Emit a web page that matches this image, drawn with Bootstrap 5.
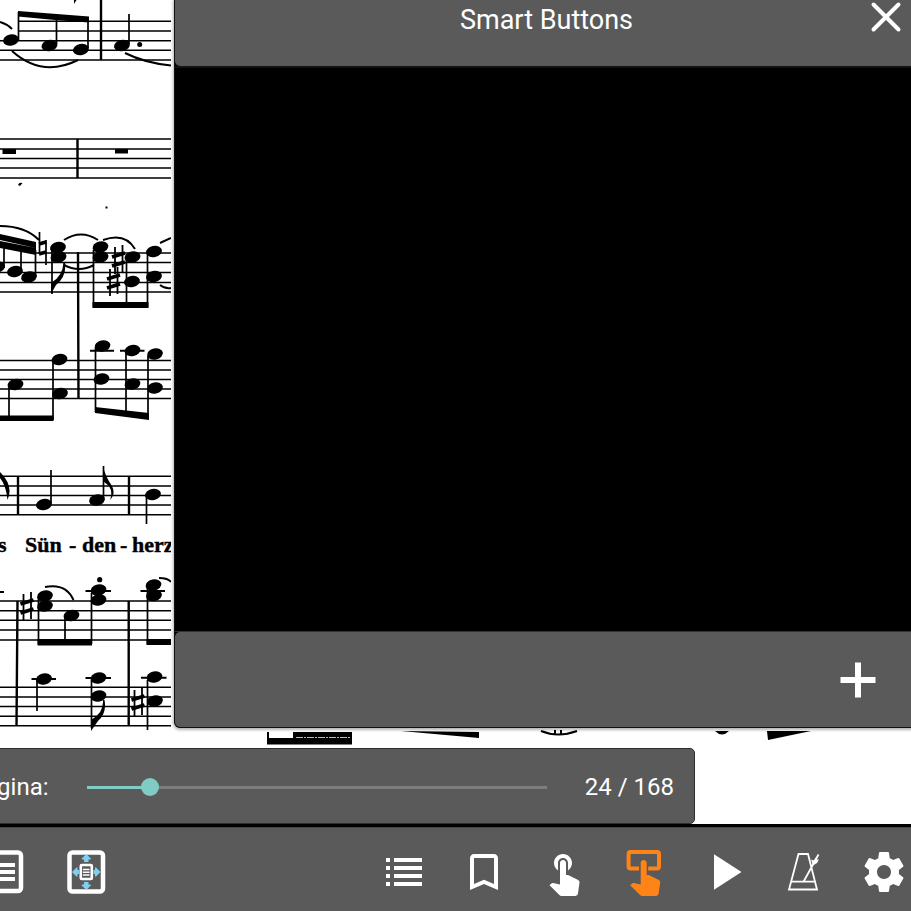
<!DOCTYPE html>
<html lang="es">
<head>
<meta charset="utf-8">
<meta name="viewport" content="width=device-width, initial-scale=1">
<title>Smart Buttons</title>
<link href="https://cdn.jsdelivr.net/npm/bootstrap@5.3.0/dist/css/bootstrap.min.css" rel="stylesheet">
<style>
  :root { --chrome: #5a5a5a; --chrome-edge: #2e2e2e; --accent: #80cbc4; --active: #ff8418; }
  body { font-family: Roboto, "Noto Sans", sans-serif; background: #fff; }
  .score { z-index: 0; }
  .lyrics { font: bold 22px "Liberation Serif", serif; stroke: #000; stroke-width: .4px; }
  .smart-panel { z-index: 1; margin: 0 -8px 20px 174px; background: #000; border: 1px solid #111; border-top: 0; border-radius: 0 0 6px 6px; box-shadow: 0 1px 3px 1px rgba(0,0,0,.3); }
  .panel-head, .panel-foot { background: var(--chrome); border-radius: 5px; }
  .panel-head { min-height: 66px; border-radius: 0 0 5px 5px; }
  .panel-body { border-top: 2px solid #111; border-bottom: 1px solid #333; }
  .panel-foot { min-height: 95px; padding-right: 36px; }
  .panel-title { font-size: 27px; line-height: 40px; font-weight: 400; }
  .head-side { width: 64px; height: 34px; }
  .tool { background: none; border: 0; padding: 0; color: #fff; display: flex; align-items: center; justify-content: center; }
  .pager { z-index: 1; height: 76px; margin: 0 216px 0 -34px; padding: 2px 20px 0 2px; gap: 29px; font-size: 24px; background: var(--chrome); border: 1px solid var(--chrome-edge); border-radius: 5px; }
  .page-slider { --at: 0; appearance: none; -webkit-appearance: none; height: 20px; margin: 0; min-width: 0;
    background:
      linear-gradient(var(--accent), var(--accent)) 9px 50% / calc((100% - 18px) * var(--at)) 3px no-repeat,
      linear-gradient(#7d7d7d, #7d7d7d) 50% 50% / calc(100% - 18px) 3px no-repeat; }
  .page-slider::-webkit-slider-thumb { -webkit-appearance: none; width: 18px; height: 18px; border-radius: 50%; background: var(--accent); }
  .page-slider::-moz-range-thumb { width: 18px; height: 18px; border: 0; border-radius: 50%; background: var(--accent); }
  .toolbar { z-index: 2; height: 87px; margin: 0 -13px 0 -37px; padding-top: 5px; background: var(--chrome); border-top: 3px solid #000; box-shadow: inset 0 1px 0 #444; }
  .toolbar .tool { width: 80px; height: 80px; }
  .toolbar .view-tool { width: 82px; }
  .toolbar .is-active { color: var(--active); }
</style>
</head>
<body class="vh-100 overflow-hidden">
<div class="d-flex flex-column vh-100 overflow-hidden">
  <main class="flex-grow-1 position-relative d-flex flex-column">

    <svg class="score position-absolute top-0 start-0 w-100 h-100" viewBox="0 0 911 824" preserveAspectRatio="xMinYMin slice" role="img" aria-label="Partitura">
      <defs>
        <clipPath id="leaf"><rect width="171" height="740"/></clipPath>
        <ellipse id="n" rx="8" ry="5.6" transform="rotate(-12)"/>
        <g id="sharp" fill="none" stroke="#000"><path stroke-width="1.8" d="M-3.5-13V14M4-15V12"/><path stroke-width="3.800" d="M-6.500-3L6.500-7M-6.500 6L6.500 2"/></g>
      </defs>
      <g clip-path="url(#leaf)">
        <g fill="none" stroke="#000" stroke-width="1.600">
          <path d="M18 21.300H171M18 31H171M0 40.700H171M0 50.300H171M0 60H171"/>
          <path d="M0 139H171M0 149H171M0 158.500H171M0 168H171M0 178H171"/>
          <path d="M36 253H171M0 262.500H171M0 272.500H171M0 282.500H171M0 292H171"/>
          <path d="M0 360.500H171M0 370H171M0 379.500H171M0 389H171M0 398.500H171"/>
          <path d="M0 476.300H171M0 486H171M0 495.500H171M0 505H171M0 514.700H171"/>
          <path d="M0 601H171M0 610.700H171M0 620.300H171M0 630H171M0 640H171"/>
          <path d="M0 687.300H171M0 697H171M0 706.500H171M0 716.300H171M0 725.700H171"/>
        </g>
        <g fill="none" stroke="#000" stroke-width="2.4">
          <path d="M101 0V60M77.500 139V178M78 252L78.500 398M18 476V515M129 476V515M17.500 601L16.500 726M128.700 601V726"/>
        </g>
        <g fill="none" stroke="#000" stroke-width="1.700">
          <path d="M18.500 12V40M56.500 18V44M88 20V48M129 14V44"/>
          <path d="M4 244V268M21 248V272M35.500 250V277M52 250V294M93.500 250V307M126.500 260V305M147.500 250V307"/>
          <path d="M9 385V417M53 360V420M95.500 348V412M126 353V413M148 356V419"/>
          <path d="M51 470V503M103.500 466V500M146.500 494V524"/>
          <path d="M38.500 597V644M65 617V643M91.500 593V644M147.500 588V644"/>
          <path d="M37 680V711M91.500 680V728M147.500 680V730"/>
        </g>
        <!-- beams -->
        <path d="M18 11L89 16.500V22.500L55 20 18 16.500ZM0 234L36 242V248L0 240ZM0 241L36 248V255L0 248ZM92.500 302H148.500V308H92.500ZM0 415.500H53.500V421H0ZM95 407L149 413V420L95 413ZM37.500 639H92V645.500H37.500ZM146.500 639H171V645H146.500Z"/>
        <!-- rests and specks -->
        <path d="M2.500 149H16V154H2.500ZM115 149H128V153.500H115ZM18 185Q19 182 22.500 183L20 186ZM105.500 206.500H107.500V208.500H105.500ZM74 4L76.500 0H74Z"/>
        <g>
          <use href="#n" transform="translate(11 40)"/>
          <use href="#n" transform="translate(49.500 45.500)"/>
          <use href="#n" transform="translate(81 49.500)"/>
          <use href="#n" transform="translate(122 45.500)"/><circle cx="139.700" cy="44.500" r="2.500"/>
          <use href="#n" transform="translate(-3 267)"/><use href="#n" transform="translate(15 271.500)"/><use href="#n" transform="translate(29 277)"/>
          <use href="#n" transform="translate(58 247.500)"/><use href="#n" transform="translate(58.500 257)"/>
          <use href="#n" transform="translate(100.500 247)"/><use href="#n" transform="translate(100.500 257)"/>
          <use href="#n" transform="translate(132.500 257)"/><use href="#n" transform="translate(132 281.500)"/>
          <use href="#n" transform="translate(154 251.500)"/><use href="#n" transform="translate(154 276.500)"/>
          <use href="#n" transform="translate(15.500 384.500)"/><use href="#n" transform="translate(59.500 359.500)"/><use href="#n" transform="translate(60 393.500)"/>
          <use href="#n" transform="translate(102.500 346)"/><use href="#n" transform="translate(101.500 379)"/>
          <use href="#n" transform="translate(132.500 350.500)"/><use href="#n" transform="translate(132.500 384)"/>
          <use href="#n" transform="translate(155 354)"/><use href="#n" transform="translate(155 388)"/>
          <use href="#n" transform="translate(44 504.500)"/><use href="#n" transform="translate(97 500)"/><use href="#n" transform="translate(153 494.500)"/>
          <use href="#n" transform="translate(45 596)"/><use href="#n" transform="translate(45 606)"/><use href="#n" transform="translate(71.500 615.500)"/>
          <use href="#n" transform="translate(98.500 590)"/><use href="#n" transform="translate(98.500 600)"/><circle cx="99.700" cy="579.700" r="2.600"/>
          <use href="#n" transform="translate(153.500 585)"/><use href="#n" transform="translate(154 595.500)"/>
          <use href="#n" transform="translate(44 679)"/><use href="#n" transform="translate(98.500 678)"/><use href="#n" transform="translate(98.500 696)"/>
          <use href="#n" transform="translate(154.500 677)"/><use href="#n" transform="translate(155 701)"/>
        </g>
        <!-- ledger lines -->
        <path fill="none" stroke="#000" stroke-width="2" d="M90 350.700H114M120 350.700H144.500M0 592H4M85.500 591H111M140.500 591H165M31.500 679H56M85.500 678H111M141 677.700H166.500"/>
        <!-- ties and slurs -->
        <g fill="none" stroke="#000" stroke-width="2">
          <path d="M0 22Q7 24 12 29M12 51Q42 78 78 60M125 53Q145 63 171 65.500M0 226Q25 226 39 240M64 240Q81 229 98 240M64 265Q79 273 94 265M103 240Q125 232 135 249M160 243L171 238M160 285Q165 289 171 288M45 587Q66 583 73.500 600M159 578Q168 578 171 582"/>
        </g>
        <!-- flags: the stems of these notes carry a thin curve that thickens at the stem -->
        <path d="M51 294V283Q63 276 63.500 262L65 262Q67 276 56 285ZM103 466Q105 476 112 486Q116 494 110 500Q113 492 109 486L103 481ZM0 472Q14 486 7.500 500Q6 485 0 478ZM91 731V720Q104 713 103 700L104.500 700Q107 713 98 721Z"/>
        <use href="#sharp" transform="translate(118.500 260)"/><use href="#sharp" transform="translate(113.500 282)"/>
        <use href="#sharp" transform="translate(27 607)"/><use href="#sharp" transform="translate(138 703)"/>
        <path fill="none" stroke="#000" stroke-width="1.700" d="M39.500 232V254M46 240V265"/><path fill="none" stroke="#000" stroke-width="3.500" d="M39 244L46 242M39 254L46 252"/>
        <g class="lyrics">
          <text x="-2" y="552">s</text><text x="25" y="552">Sün</text><text x="69" y="552">-</text><text x="82" y="552">den</text><text x="120" y="552">-</text><text x="132" y="552">herz</text>
        </g>
      </g>
      <!-- system below the panel -->
      <path d="M267 732H269V738H293V732H352V744.500H267ZM401 731L479 732V738ZM476 732H479V738ZM715 731Q722 738 729 731ZM767 731H811L768 740Z"/>
      <path fill="none" stroke="#000" stroke-width="2" d="M541 731Q558 738 577 731M555 730V734M561 730V734"/>
      <path fill="none" stroke="#bbb" d="M296 737.500H350" stroke-dasharray="7 1 2 1"/>
    </svg>

    <section class="smart-panel flex-grow-1 d-flex flex-column position-relative" aria-labelledby="panelTitle">
      <header class="panel-head d-flex align-items-start text-white">
        <span class="head-side"></span>
        <h1 class="panel-title flex-grow-1 text-center m-0" id="panelTitle">Smart Buttons</h1>
        <button type="button" class="tool head-side" aria-label="Cerrar">
          <svg width="32" height="32" viewBox="0 0 32 32" fill="none" stroke="currentColor" stroke-width="4" stroke-linecap="round"><path d="M3.500 3.500L28.500 28.500M28.500 3.500L3.500 28.500"/></svg>
        </button>
      </header>
      <div class="panel-body flex-grow-1"></div>
      <footer class="panel-foot d-flex align-items-center justify-content-end">
        <button type="button" class="tool" aria-label="Añadir">
          <svg width="48" height="48" viewBox="0 0 48 48" fill="currentColor"><path d="M21 6.500H27V21H41.500V27H27V41.500H21V27H6.500V21H21Z"/></svg>
        </button>
      </footer>
    </section>

    <form class="pager position-relative d-flex align-items-center text-white">
      <label for="page">Página:</label>
      <input class="page-slider flex-grow-1" type="range" id="page" min="1" max="168" value="24" style="--at: .1377">
      <output for="page">24 / 168</output>
    </form>
  </main>

  <nav class="toolbar flex-shrink-0 d-flex align-items-center justify-content-between" aria-label="Herramientas">
    <div class="d-flex">
      <button type="button" class="tool view-tool" aria-label="Vista de página">
        <svg width="48" height="48" viewBox="0 0 48 48" fill="none" stroke="currentColor" stroke-width="4.500"><rect x="7.500" y="4.500" width="33.500" height="38.500" rx="3"/><path stroke-width="4" d="M13 17H35M13 24H35M13 31H35"/></svg>
      </button>
      <button type="button" class="tool view-tool" aria-label="Ajustar página">
        <svg width="48" height="48" viewBox="0 0 48 48" fill="none" stroke="currentColor"><rect x="7.500" y="4.500" width="33.500" height="39" rx="3" stroke-width="4.500"/><rect x="18.800" y="17" width="11" height="14" rx="1" stroke-width="2.600"/><path stroke-width="1.400" d="M21 21.500H27.500M21 24.200H27.500M21 27H27.500"/><path fill="#7fcff2" stroke="none" d="M24.300 6L28.800 10.500V11.500H26.500V14H22V11.500H19.800V10.500ZM24.300 42L28.800 37.500V36.500H26.500V34H22V36.500H19.800V37.500ZM10 24L14.500 19.500H15.500V22H17V26H15.500V28.500H14.500ZM38.500 24L34 19.500H33V22H31.500V26H33V28.500H34Z"/></svg>
      </button>
    </div>
    <div class="d-flex">
      <button type="button" class="tool" aria-label="Lista">
        <svg width="48" height="48" viewBox="0 0 48 48" fill="currentColor"><path d="M6 10h4v4H6zM14 10h28v4H14zM6 18h4v4H6zM14 18h28v4H14zM6 26h4v4H6zM14 26h28v4H14zM6 34h4v4H6zM14 34h28v4H14z"/></svg>
      </button>
      <button type="button" class="tool" aria-label="Marcadores">
        <svg width="48" height="48" viewBox="0 0 48 48" fill="currentColor"><path d="M34 6H14c-2.210 0-3.980 1.790-3.980 4L10 42l14-6 14 6V10c0-2.210-1.790-4-4-4zm0 30l-10-4.350L14 36V10h20v26z"/></svg>
      </button>
      <button type="button" class="tool" aria-label="Toque">
        <svg width="48" height="48" viewBox="0 0 24 24" fill="currentColor"><path d="M9 11.240V7.500C9 6.120 10.120 5 11.500 5S14 6.120 14 7.500v3.740c1.210-.81 2-2.180 2-3.740C16 5.010 13.990 3 11.500 3S7 5.010 7 7.500c0 1.560.79 2.930 2 3.740z"/><path id="hand" d="M18.840 15.870l-4.540-2.260c-.17-.07-.35-.11-.54-.11H13v-6c0-.83-.67-1.500-1.500-1.500S10 6.670 10 7.500v10.740l-3.430-.72c-.08-.01-.15-.03-.24-.03-.31 0-.59.13-.79.33l-.79.8 4.940 4.940c.27.27.65.44 1.060.44h6.790c.75 0 1.330-.55 1.440-1.280l.75-5.270c.01-.07.02-.14.02-.2 0-.62-.38-1.160-.91-1.380z"/></svg>
      </button>
      <button type="button" class="tool is-active" aria-label="Smart Buttons" aria-pressed="true">
        <svg width="48" height="48" viewBox="0 0 24 24" fill="currentColor"><rect x="4.300" y="2" width="15.200" height="8.200" rx="1" fill="none" stroke="currentColor" stroke-width="2"/><path d="M11.800 13V7.500" stroke="#5a5a5a" stroke-width="4.600" stroke-linecap="round"/><use href="#hand" x=".35"/></svg>
      </button>
      <button type="button" class="tool" aria-label="Reproducir">
        <svg width="48" height="48" viewBox="0 0 48 48" fill="currentColor"><path d="M14 6.200V41.800L41.500 24Z"/></svg>
      </button>
      <button type="button" class="tool" aria-label="Metrónomo">
        <svg width="48" height="48" viewBox="0 0 48 48" fill="none" stroke="currentColor" stroke-width="1.800"><path d="M9 41.500H37L28 6H18.500ZM11.500 33.700H35M23.500 33.700L38.500 6.500"/><path fill="currentColor" stroke="none" d="M31 11.500L34 12.500 35.500 9.500 37 11.500 39 11.500 37 15 33 17.500Z"/></svg>
      </button>
      <button type="button" class="tool" aria-label="Ajustes">
        <svg width="48" height="48" viewBox="0 0 24 24" fill="currentColor"><path d="M19.430 12.980c.04-.32.07-.64.07-.98s-.03-.66-.07-.98l2.110-1.650c.19-.15.24-.42.12-.64l-2-3.460c-.12-.22-.39-.3-.61-.22l-2.490 1c-.52-.4-1.080-.73-1.690-.98l-.38-2.650C14.460 2.180 14.250 2 14 2h-4c-.25 0-.46.18-.49.42l-.38 2.650c-.61.25-1.170.59-1.690.98l-2.490-1c-.23-.09-.49 0-.61.22l-2 3.460c-.13.22-.07.49.12.64l2.110 1.650c-.04.32-.07.65-.07.98s.03.66.07.98l-2.110 1.650c-.19.15-.24.42-.12.64l2 3.460c.12.22.39.3.61.22l2.490-1c.52.4 1.080.73 1.690.98l.38 2.650c.03.24.24.42.49.42h4c.25 0 .46-.18.49-.42l.38-2.650c.61-.25 1.170-.59 1.690-.98l2.490 1c.23.09.49 0 .61-.22l2-3.460c.12-.22.07-.49-.12-.64l-2.110-1.650zM12 15.500c-1.930 0-3.500-1.570-3.500-3.500s1.570-3.500 3.500-3.500 3.500 1.570 3.500 3.500-1.570 3.500-3.500 3.500z"/></svg>
      </button>
    </div>
  </nav>
</div>
<script src="https://cdn.jsdelivr.net/npm/bootstrap@5.3.0/dist/js/bootstrap.bundle.min.js"></script>
</body>
</html>
